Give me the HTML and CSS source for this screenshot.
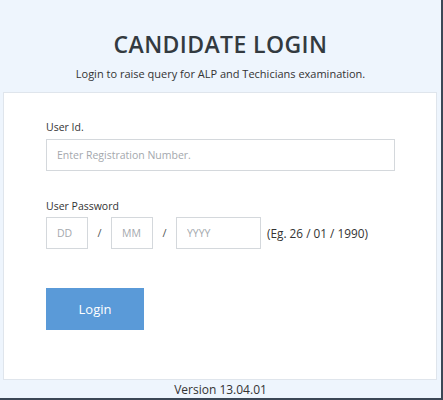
FILE: index.html
```html
<!DOCTYPE html>
<html>
<head>
<meta charset="utf-8">
<link rel="stylesheet" href="styles.css">
</head>
<body>
<div class="frame">
  <div class="header">
    <h1 class="title">CANDIDATE LOGIN</h1>
    <p class="subtitle">Login to raise query for ALP and Techicians examination.</p>
  </div>
  <div class="card">
    <label class="label">User Id.</label>
    <input class="input-full" type="text" placeholder="Enter Registration Number.">
    <label class="label label-pass">User Password</label>
    <div class="date-row">
      <input class="input-dd" type="text" placeholder="DD">
      <span class="slash">/</span>
      <input class="input-dd" type="text" placeholder="MM">
      <span class="slash">/</span>
      <input class="input-yyyy" type="text" placeholder="YYYY">
      <span class="example">(Eg. 26 / 01 / 1990)</span>
    </div>
    <button class="btn">Login</button>
  </div>
  <div class="version">Version 13.04.01</div>
</div>
</body>
</html>
```
FILE: styles.css
```css
* { box-sizing: border-box; }
html, body { margin: 0; padding: 0; }
body {
  width: 443px;
  height: 400px;
  font-family: "Open Sans", "DejaVu Sans", sans-serif;
  background: #eef5fd;
  overflow: hidden;
}
.frame {
  width: 443px;
  height: 400px;
  background: #eef5fd;
  border-right: 2px solid #3b4756;
  border-bottom: 2px solid #3b4756;
  display: flex;
  flex-direction: column;
}
.header {
  padding-top: 29px;
  text-align: center;
  height: 92px;
}
.title {
  margin: 0;
  font-size: 23px;
  font-weight: 600;
  color: #333a40;
  line-height: 30px;
  letter-spacing: 0.4px;
}
.subtitle {
  margin: 7px 0 0;
  font-size: 11px;
  color: #333;
  line-height: 16px;
}
.card {
  margin: 0 4px 0 3px;
  height: 289px;
  background: #fff;
  border: 1px solid #dfe5ec;
  padding: 27px 0 0 42px;
  display: flex;
  flex-direction: column;
  align-items: flex-start;
}
.label {
  font-size: 10.5px;
  color: #333;
  line-height: 14px;
}
.input-full {
  margin-top: 5px;
  width: 349px;
  height: 32px;
  border: 1px solid #d4d8dc;
  padding: 0 10px;
  font-family: inherit;
  font-size: 10.5px;
  outline: none;
}
.label-pass {
  margin-top: 28px;
}
.date-row {
  margin-top: 4px;
  display: flex;
  align-items: center;
}
.date-row input {
  height: 32px;
  border: 1px solid #d4d8dc;
  padding: 0 10px;
  font-family: inherit;
  font-size: 10.5px;
  outline: none;
}
input::placeholder { color: #a4a8ad; }
.input-dd { width: 42px; }
.input-yyyy { width: 85px; }
.slash {
  width: 23px;
  text-align: center;
  font-size: 11px;
  color: #555;
}
.example {
  margin-left: 6px;
  font-size: 11.8px;
  color: #333;
}
.btn {
  margin-top: 39px;
  width: 98px;
  height: 42px;
  border: none;
  background: #5a9ad8;
  color: #fff;
  font-family: inherit;
  font-size: 13px;
  font-weight: 500;
  padding: 0;
}
.version {
  text-align: center;
  font-size: 12px;
  color: #333;
  line-height: 17px;
  margin-top: 1px;
}
```
